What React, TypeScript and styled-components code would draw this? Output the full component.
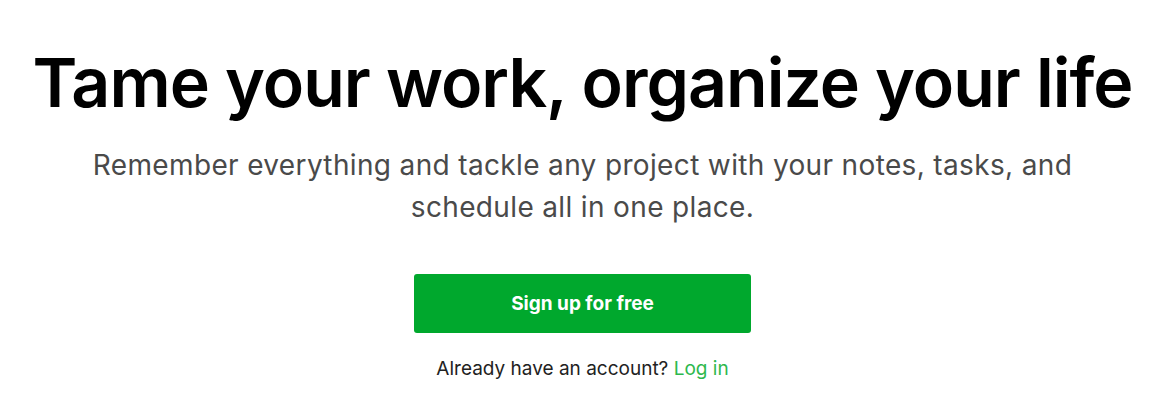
import styled, { createGlobalStyle } from "styled-components";

const GlobalStyle = createGlobalStyle`
  html, body {
    margin: 0;
    padding: 0;
    background: #ffffff;
  }
  body {
    font-family: Inter, "Noto Sans", "Liberation Sans", sans-serif;
  }
`;

function App() {
  return (
    <>
      <GlobalStyle />
      <StyledHero>
        <StyledTitle>Tame your work, organize your life</StyledTitle>
        <StyledLead>
          Remember everything and tackle any project with your notes, tasks, and
          schedule all in one place.
        </StyledLead>
        <StyledCta type="button">Sign up for free</StyledCta>
        <StyledLogin>
          Already have an account? <a href="#">Log in</a>
        </StyledLogin>
      </StyledHero>
    </>
  );
}

export default App;

const StyledHero = styled.main`
  display: flex;
  flex-direction: column;
  align-items: center;
  padding: 41px 0 0 5px;
  text-align: center;
`;
const StyledTitle = styled.h1`
  margin: 0;
  font-size: 68px;
  font-weight: 600;
  line-height: 82px;
  letter-spacing: -1px;
  color: #000000;
  white-space: nowrap;
`;
const StyledLead = styled.p`
  margin: 21px 0 0;
  max-width: 1010px;
  font-size: 28px;
  font-weight: 400;
  line-height: 42px;
  letter-spacing: 0.35px;
  color: #4a4a4a;
`;
const StyledCta = styled.button`
  margin-top: 46px;
  width: 337px;
  height: 59px;
  border: none;
  border-radius: 3px;
  background-color: #00a82d;
  color: #ffffff;
  font-family: inherit;
  font-size: 19px;
  font-weight: 700;
  cursor: pointer;
`;
const StyledLogin = styled.p`
  margin: 24px 0 0;
  font-size: 19px;
  line-height: 24px;
  color: #222222;
  & > a {
    color: #2db84d;
    text-decoration: none;
  }
`;
